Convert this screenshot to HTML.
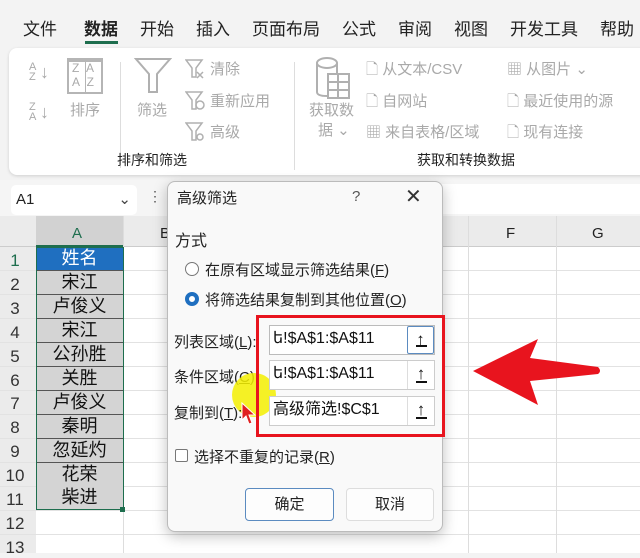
<!DOCTYPE html>
<html><head><meta charset="utf-8"><style>
*{margin:0;padding:0;box-sizing:border-box}
body{width:640px;height:553px;overflow:hidden;background:#f3f3f3;font-family:"Liberation Sans","Noto Sans CJK SC",sans-serif;position:relative;color:#222}
.a{position:absolute;white-space:nowrap}
.tab{top:15px;font-size:17px;color:#222}
.g{color:#a9a9a9;font-size:15px}
.cell{position:absolute;left:36px;width:87px;height:24px;background:#d4d4d4;border-bottom:1px solid #555;text-align:center;font-size:18px;line-height:23px;color:#111}
.rn{position:absolute;left:0;width:30px;text-align:center;font-size:17px;color:#333}
.inp{position:absolute;left:269px;width:166px;height:30px;border:1px solid #ccc;background:#fff;font-size:16px;line-height:26px;padding-left:3px;color:#111}
.inp b{position:absolute;right:0;top:0;width:27px;height:28px;border-left:1px solid #ddd;text-align:center;font-size:17px;line-height:26px;font-weight:900}
.inp b i{position:absolute;left:8px;bottom:6px;width:11px;height:2px;background:#111}
</style></head><body>
<div class="a tab" style="left:23px">文件</div>
<div class="a tab" style="left:84px;font-weight:bold">数据</div>
<div style="position:absolute;left:85px;top:41px;width:33px;height:3px;background:#1e6e4e"></div>
<div class="a tab" style="left:140px">开始</div>
<div class="a tab" style="left:196px">插入</div>
<div class="a tab" style="left:252px">页面布局</div>
<div class="a tab" style="left:342px">公式</div>
<div class="a tab" style="left:398px">审阅</div>
<div class="a tab" style="left:454px">视图</div>
<div class="a tab" style="left:510px">开发工具</div>
<div class="a tab" style="left:600px">帮助</div>
<div style="position:absolute;left:9px;top:48px;width:640px;height:127px;background:#fff;border-radius:8px;box-shadow:0 1px 3px rgba(0,0,0,.15)"></div>
<div class="a g" style="left:29px;top:62px;font-size:11px;line-height:10px">A<br>Z</div><div class="a g" style="left:40px;top:62px;font-size:18px">↓</div>
<div class="a g" style="left:29px;top:102px;font-size:11px;line-height:10px">Z<br>A</div><div class="a g" style="left:40px;top:102px;font-size:18px">↓</div>
<div style="position:absolute;left:67px;top:58px;width:36px;height:36px;border:2px solid #b5b5b5;border-top-width:4px"></div>
<div style="position:absolute;left:85px;top:60px;width:1px;height:32px;background:#b5b5b5"></div>
<div class="a g" style="left:72px;top:61px;font-size:12px;line-height:14px">Z&nbsp;&nbsp;A<br>A&nbsp;&nbsp;Z</div>
<div class="a g" style="left:70px;top:99px">排序</div>
<div style="position:absolute;left:120px;top:62px;width:1px;height:106px;background:#ddd"></div>
<svg class="a" style="left:134px;top:57px" width="38" height="38"><path d="M2 2H36L23 17V35H15V17Z" fill="none" stroke="#b0b0b0" stroke-width="2"/></svg>
<div class="a g" style="left:137px;top:99px">筛选</div>
<svg class="a" style="left:185px;top:58px" width="22" height="90"><g fill="none" stroke="#b0b0b0" stroke-width="1.5"><path d="M1 2H17L11 10V19H7V10Z"/><path d="M12 14L18 20M18 14L12 20"/><path d="M1 34H17L11 42V51H7V42Z"/><circle cx="15" cy="47" r="4"/><path d="M1 65H17L11 73V82H7V73Z"/><circle cx="15" cy="79" r="3"/></g></svg>
<div class="a g" style="left:210px;top:58px">清除</div>
<div class="a g" style="left:210px;top:90px">重新应用</div>
<div class="a g" style="left:210px;top:121px">高级</div>
<div class="a" style="left:117px;top:150px;font-size:14px">排序和筛选</div>
<div style="position:absolute;left:294px;top:62px;width:1px;height:108px;background:#ddd"></div>
<svg class="a" style="left:314px;top:56px" width="40" height="46"><g fill="none" stroke="#b0b0b0" stroke-width="2"><ellipse cx="13" cy="7" rx="10" ry="5"/><path d="M3 7V36Q3 40 13 40M23 7V18"/><rect x="14" y="18" width="21" height="24"/><path d="M14 26H35M14 34H35M24 18V42"/></g></svg>
<div class="a g" style="left:309px;top:99px">获取数</div>
<div class="a g" style="left:318px;top:119px">据 ⌄</div>
<div class="a g" style="left:366px;top:58px">🗋 从文本/CSV</div>
<div class="a g" style="left:366px;top:90px">🗋 自网站</div>
<div class="a g" style="left:366px;top:121px">▦ 来自表格/区域</div>
<div class="a g" style="left:507px;top:58px">▦ 从图片 ⌄</div>
<div class="a g" style="left:507px;top:90px">🗋 最近使用的源</div>
<div class="a g" style="left:507px;top:121px">🗋 现有连接</div>
<div class="a" style="left:417px;top:150px;font-size:14px">获取和转换数据</div>
<div style="position:absolute;left:0;top:180px;width:640px;height:36px;background:#f5f5f5"></div>
<div style="position:absolute;left:170px;top:184px;width:470px;height:30px;background:#fff"></div>
<div style="position:absolute;left:11px;top:185px;width:126px;height:30px;background:#fff;border-radius:5px;font-size:15px;line-height:30px;padding-left:5px">A1<span style="position:absolute;right:6px;color:#444">⌄</span></div>
<div class="a" style="left:148px;top:188px;font-size:14px;color:#555">⋮</div>
<div style="position:absolute;left:0;top:216px;width:640px;height:337px;background:#fff"></div>
<div style="position:absolute;left:0;top:216px;width:640px;height:31px;background:#ebebeb;border-bottom:1px solid #ccc"></div>
<div style="position:absolute;left:0;top:247px;width:36px;height:306px;background:#ebebeb"></div>
<div style="position:absolute;left:36px;top:216px;width:87px;height:31px;background:#d2d2d2;border-bottom:2px solid #1e6e4e"></div>
<div class="a" style="left:72px;top:225px;font-size:15px;color:#1e6e4e">A</div>
<div class="a" style="left:160px;top:225px;font-size:15px">B</div>
<div class="a" style="left:506px;top:225px;font-size:15px">F</div>
<div class="a" style="left:592px;top:225px;font-size:15px">G</div>
<div style="position:absolute;left:0;top:247px;width:640px;height:306px;background:repeating-linear-gradient(to bottom,transparent 0 23px,#e2e2e2 23px 24px)"></div>
<div style="position:absolute;left:468px;top:216px;width:1px;height:337px;background:#ddd"></div>
<div style="position:absolute;left:556px;top:216px;width:1px;height:337px;background:#ddd"></div>
<div style="position:absolute;left:123px;top:216px;width:1px;height:337px;background:#ddd"></div>
<div class="cell" style="top:247px;background:#1f6fc0;color:#fff">姓名</div>
<div class="cell" style="top:271px">宋江</div>
<div class="cell" style="top:295px">卢俊义</div>
<div class="cell" style="top:319px">宋江</div>
<div class="cell" style="top:343px">公孙胜</div>
<div class="cell" style="top:367px">关胜</div>
<div class="cell" style="top:391px">卢俊义</div>
<div class="cell" style="top:415px">秦明</div>
<div class="cell" style="top:439px">忽延灼</div>
<div class="cell" style="top:463px">花荣</div>
<div class="cell" style="top:486px">柴进</div>
<div style="position:absolute;left:36px;top:247px;width:88px;height:263px;border:1.5px solid #1e6e4e"></div>
<div style="position:absolute;left:120px;top:507px;width:5px;height:5px;background:#1e6e4e"></div>
<div class="rn" style="top:251px;color:#1e6e4e">1</div><div class="rn" style="top:275px">2</div><div class="rn" style="top:299px">3</div><div class="rn" style="top:323px">4</div><div class="rn" style="top:347px">5</div><div class="rn" style="top:371px">6</div><div class="rn" style="top:394px">7</div><div class="rn" style="top:418px">8</div><div class="rn" style="top:442px">9</div><div class="rn" style="top:466px">10</div><div class="rn" style="top:490px">11</div><div class="rn" style="top:514px">12</div><div class="rn" style="top:538px">13</div>
<div style="position:absolute;left:167px;top:181px;width:276px;height:351px;background:#f9f9f9;border:1px solid #bbb;border-radius:8px;box-shadow:0 4px 14px rgba(0,0,0,.25)"></div>
<div class="a" style="left:177px;top:187px;font-size:15px">高级筛选</div>
<div class="a" style="left:352px;top:188px;font-size:15px;color:#555">?</div>
<div class="a" style="left:405px;top:184px;font-size:20px;color:#333">✕</div>
<div class="a" style="left:175px;top:227px;font-size:16px">方式</div>
<div style="position:absolute;left:185px;top:262px;width:14px;height:14px;border:1px solid #777;border-radius:50%;background:#fff"></div>
<div class="a" style="left:205px;top:259px;font-size:15px">在原有区域显示筛选结果(<u>F</u>)</div>
<div style="position:absolute;left:185px;top:292px;width:14px;height:14px;border:4px solid #1f6fc0;border-radius:50%;background:#fff"></div>
<div class="a" style="left:205px;top:289px;font-size:15px">将筛选结果复制到其他位置(<u>O</u>)</div>
<div class="a" style="left:174px;top:331px;font-size:15px">列表区域(<u>L</u>):</div>
<div class="a" style="left:174px;top:366px;font-size:15px">条件区域(<u>C</u>)</div>
<div style="position:absolute;left:232px;top:373px;width:44px;height:44px;border-radius:50%;background:#f5f000;opacity:.85"></div>
<div class="a" style="left:174px;top:402px;font-size:15px">复制到(<u>T</u>):</div>
<svg class="a" style="left:241px;top:402px" width="16" height="24"><path d="M1 1L1 18L5 14L8 22L11 21L8 13L14 13Z" fill="#e02020" stroke="#fff" stroke-width="1"/></svg>
<div class="inp" style="top:325px;border-color:#bbb">ե!$A$1:$A$11<b style="border:1px solid #5b8bc0;border-radius:2px">↑<i></i></b></div>
<div class="inp" style="top:360px">ե!$A$1:$A$11<b>↑<i></i></b></div>
<div class="inp" style="top:396px">高级筛选!$C$1<b>↑<i></i></b></div>
<div style="position:absolute;left:256px;top:315px;width:189px;height:122px;border:3px solid #e8141e"></div>
<div style="position:absolute;left:175px;top:449px;width:13px;height:13px;border:1px solid #777;background:#fff;border-radius:2px"></div>
<div class="a" style="left:194px;top:446px;font-size:15px">选择不重复的记录(<u>R</u>)</div>
<div style="position:absolute;left:245px;top:488px;width:89px;height:33px;border:1px solid #5b8bc0;border-radius:4px;background:#fdfdfd;text-align:center;line-height:31px;font-size:15px">确定</div>
<div style="position:absolute;left:346px;top:488px;width:88px;height:33px;border:1px solid #ddd;border-radius:4px;background:#fdfdfd;text-align:center;line-height:31px;font-size:15px">取消</div>
<svg class="a" style="left:470px;top:335px" width="132" height="72"><path d="M3 36L68 4L60 23L128 32Q132 36 128 39L60 46L68 70Z" fill="#e8141e"/></svg>
</body></html>
